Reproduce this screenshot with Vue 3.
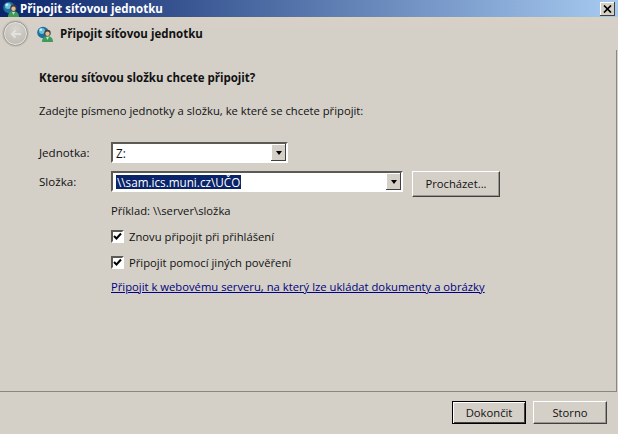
<script setup>
const rows = [
  { label: 'Znovu připojit při přihlášení' },
  { label: 'Připojit pomocí jiných pověření' },
]
</script>

<template>
  <div class="win">
    <div class="title">
      <svg class="ico small" viewBox="0 0 16 16"><circle cx="6" cy="6.500" r="5.800" fill="#1f6f9f"/><circle cx="5" cy="5" r="3" fill="#6cc0dc"/><circle cx="3.800" cy="3.800" r="1.300" fill="#c8ecf4"/><circle cx="10.500" cy="7" r="3.200" fill="#4a3a30"/><circle cx="10.500" cy="7.800" r="2.200" fill="#e0bd98"/><path d="M5 16c0-4 2-5.800 5.500-5.800s5.500 1.800 5.500 5.800z" fill="#3f9a5c"/><path d="M9 11h3l-1.500 3z" fill="#b8e8c0"/></svg>
      <span class="title-text">Připojit síťovou jednotku</span>
      <div class="close"><svg viewBox="0 0 9 8" width="9" height="8"><path d="M1 0.500L8 7.500M8 0.500L1 7.500" stroke="#000" stroke-width="1.700"/></svg></div>
    </div>
    <div class="nav">
      <div class="back"><svg viewBox="0 0 12 10" width="12" height="10"><path d="M11 5H2M5.500 1.500L2 5l3.500 3.500" fill="none" stroke="#e4e2dc" stroke-width="2"/></svg></div>
      <svg class="ico big" viewBox="0 0 16 16"><circle cx="6" cy="6.500" r="5.800" fill="#1f6f9f"/><circle cx="5" cy="5" r="3" fill="#6cc0dc"/><circle cx="3.800" cy="3.800" r="1.300" fill="#c8ecf4"/><circle cx="10.500" cy="7" r="3.200" fill="#4a3a30"/><circle cx="10.500" cy="7.800" r="2.200" fill="#e0bd98"/><path d="M5 16c0-4 2-5.800 5.500-5.800s5.500 1.800 5.500 5.800z" fill="#3f9a5c"/><path d="M9 11h3l-1.500 3z" fill="#b8e8c0"/></svg>
      <span class="nav-text">Připojit síťovou jednotku</span>
    </div>
    <div class="content">
      <h1>Kterou síťovou složku chcete připojit?</h1>
      <p class="intro">Zadejte písmeno jednotky a složku, ke které se chcete připojit:</p>
      <div class="form">
        <label>Jednotka:</label>
        <div class="combo c1"><span class="val">Z:</span><span class="arrowbtn"><i></i></span></div>
        <span></span>
        <label>Složka:</label>
        <div class="combo c2"><span class="val"><span class="sel">\\sam.ics.muni.cz\UČO</span></span><span class="arrowbtn"><i></i></span></div>
        <button class="btn browse">Procházet...</button>
      </div>
      <div class="side">
        <div class="ex">Příklad: \\server\složka</div>
        <div v-for="r in rows" :key="r.label" class="chk">
          <span class="box"><svg viewBox="0 0 9 9" width="9" height="9"><path d="M1 4l2.500 2.500L8 1.500" fill="none" stroke="#000" stroke-width="2"/></svg></span>
          <span>{{ r.label }}</span>
        </div>
        <a class="link">Připojit k webovému serveru, na který lze ukládat dokumenty a obrázky</a>
      </div>
    </div>
    <div class="foot">
      <button class="btn def">Dokončit</button>
      <button class="btn">Storno</button>
    </div>
  </div>
</template>

<style scoped>
.win { width: 618px; height: 434px; background: #d4d0c8; display: flex; flex-direction: column; font: 11.250px/14px "Open Sans", "Noto Sans", sans-serif; color: #111; box-sizing: border-box; overflow: hidden; }
.title { height: 17px; flex: none; display: flex; align-items: center; padding: 0 3px 0 3px; color: #fff; font-weight: 700; font-size: 11.500px; background: linear-gradient(90deg, #0a246a, #a6caf0); }
.title-text { margin-left: 1px; }
.ico.small { width: 16px; height: 16px; flex: none; }
.close { margin-left: auto; width: 15px; height: 14px; background: #d4d0c8; display: flex; align-items: center; justify-content: center; box-shadow: inset -1px -1px #404040, inset 1px 1px #fff; }
.nav { height: 33px; flex: none; display: flex; align-items: center; padding-left: 2px; background: linear-gradient(180deg, #d9d3bd, #d8cfc9 4px, #d4d0c8 10px); }
.back { width: 23px; height: 23px; border-radius: 50%; border: 1px solid #9a9791; background: radial-gradient(circle at 50% 30%, #d8d5ce, #bcb9b2 85%); display: flex; align-items: center; justify-content: center; box-shadow: inset 0 0 0 1px #e6e4de, 0 0 0 1px #c4c1ba; margin-left: 1px; }
.ico.big { width: 16px; height: 16px; margin-left: 9px; }
.nav-text { margin-left: 7px; font-weight: 700; font-size: 11.500px; }
.content { flex: 1; border: 1px solid #8a8780; border-width: 0 1px 1px 0; margin-right: 1px; padding: 21px 0 0 39px; min-height: 0; }
h1 { margin: 0; font-size: 11.500px; line-height: 14px; font-weight: 700; }
.intro { margin: 19px 0 0; }
.form { margin-top: 24px; display: grid; grid-template-columns: 72px 292px 1fr; grid-template-rows: 21px 26px; row-gap: 8px; align-items: start; }
.form label { line-height: 21px; font-size: 11.600px; }
.combo { height: 21px; box-sizing: border-box; background: #fff; display: flex; align-items: center; justify-content: space-between; border: 2px solid; border-color: #5c5a55 #fff #fff #5c5a55; padding: 0 0 0 3px; }
.c1 { width: 177px; }
.c2 { width: 292px; }
.arrowbtn { width: 15px; height: 17px; background: #d4d0c8; display: flex; align-items: center; justify-content: center; box-shadow: inset -1px -1px #404040, inset 1px 1px #fff; }
.arrowbtn i { width: 0; height: 0; border: 3.500px solid transparent; border-top: 4px solid #000; border-bottom: 0; }
.val { font-size: 11.700px; }
.sel { background: #0a246a; color: #fff; padding: 0 1px; display: inline-block; }
.btn { font: inherit; color: #111; height: 26px; width: 88px; background: #d4d0c8; border: 1px solid; border-color: #fff #404040 #404040 #fff; box-shadow: inset -1px -1px #9a9791; padding: 0; }
.browse { margin-left: 9px; }
.side { margin: 0 0 0 72px; padding-top: 7px; }
.chk { display: flex; align-items: center; margin-top: 11px; height: 15px; }
.box { width: 13px; height: 13px; box-sizing: border-box; background: #fff; border: 2px solid; border-color: #5c5a55 #fff #fff #5c5a55; margin-right: 5px; display: flex; align-items: center; justify-content: center; }
.link { display: block; margin-top: 10px; color: #000080; text-decoration: underline; }
.foot { height: 42px; flex: none; display: flex; justify-content: flex-end; gap: 7px; padding: 9px 11px 0 0; box-sizing: border-box; }
.foot .btn { width: 74px; height: 23px; }
.def { border-color: #000; box-shadow: inset 1px 1px #fff, inset -1px -1px #404040; }
</style>
